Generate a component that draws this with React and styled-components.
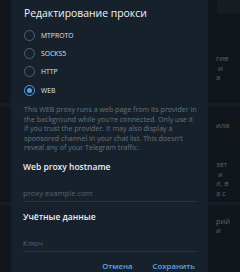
import React from "react";
import styled, { createGlobalStyle } from "styled-components";

const Global = createGlobalStyle`
  html, body { margin: 0; padding: 0; background: #0f151b; }
  body { font-family: "Open Sans", "Noto Sans", sans-serif; overflow: hidden; }
  #root { width: 240px; height: 272px; position: relative; overflow: hidden; }
`;

const BackPage = styled.div`
  display: flex;
  flex-direction: column;
  width: 240px;
  height: 272px;
  background: #10161c;
`;

const BackHeader = styled.div`
  height: 13px;
  display: flex;
  justify-content: flex-end;
`;

const HeaderTint = styled.div`
  width: 23px;
  background: #171c22;
`;

const BackSection = styled.div`
  padding-left: 216px;
  padding-top: ${(p) => p.$top}px;
  display: flex;
  flex-direction: column;
`;

const BackLine = styled.div`
  font-size: 7.5px;
  line-height: 9.6px;
  color: #5d646c;
  white-space: nowrap;
`;

const BackSep = styled.div`
  height: 3px;
  margin-top: ${(p) => p.$top}px;
  background: #161c22;
`;

const Dialog = styled.div`
  position: absolute;
  left: 11px;
  top: -3px;
  width: 197px;
  height: 290px;
  background: #17212b;
  border-radius: 6px;
  box-sizing: border-box;
  padding: 9px 11px 0 12px;
  display: flex;
  flex-direction: column;
`;

const Title = styled.div`
  font-size: 10.4px;
  line-height: 14px;
  font-weight: 500;
  color: #f2f4f6;
  padding-left: 1px;
`;

const RadioList = styled.div`
  margin-top: 6px;
  display: flex;
  flex-direction: column;
`;

const RadioRow = styled.div`
  height: 18.33px;
  display: flex;
  align-items: center;
  gap: 6px;
  padding-left: 1px;
`;

const RadioCircle = styled.div`
  width: 11px;
  height: 11px;
  box-sizing: border-box;
  border-radius: 50%;
  border: 1.5px solid ${(p) => (p.$on ? "#5a9fe0" : "#56626f")};
  display: flex;
  align-items: center;
  justify-content: center;
  &::after {
    content: "";
    width: 5px;
    height: 5px;
    border-radius: 50%;
    background: ${(p) => (p.$on ? "#5a9fe0" : "transparent")};
  }
`;

const RadioLabel = styled.div`
  font-size: 6.8px;
  line-height: 9px;
  color: #dfe3e7;
`;

const Description = styled.div`
  margin-top: 6px;
  font-size: 7.1px;
  line-height: 9.5px;
  color: #66727e;
  padding-left: 1px;
  white-space: nowrap;
`;

const Heading = styled.div`
  margin-top: ${(p) => p.$top}px;
  font-size: 8.5px;
  line-height: 12px;
  font-weight: 600;
  color: #eef0f2;
`;

const Field = styled.div`
  margin-top: 12px;
  height: 16px;
  border-bottom: 1px solid #27333f;
  display: flex;
  align-items: center;
  font-size: 7.6px;
  color: #56636f;
`;

const Actions = styled.div`
  margin-top: 7px;
  display: flex;
  justify-content: flex-end;
  gap: 20px;
  padding-right: 2px;
`;

const ActionButton = styled.div`
  font-size: 7.8px;
  line-height: 14px;
  font-weight: 600;
  color: #5ba5e8;
`;

const protocols = ["MTPROTO", "SOCKS5", "HTTP", "WEB"];

const descLines = [
  "This WEB proxy runs a web page from its provider in",
  "the background while you're connected. Only use it",
  "if you trust the provider. It may also display a",
  "sponsored channel in your chat list. This doesn't",
  "reveal any of your Telegram traffic.",
];

export default function App() {
  return (
    <>
      <Global />
      <BackPage>
        <BackHeader>
          <HeaderTint />
        </BackHeader>
        <BackSection $top={41}>
          <BackLine>гив</BackLine>
          <BackLine>&nbsp;и</BackLine>
          <BackLine>а</BackLine>
        </BackSection>
        <BackSep $top={20} />
        <BackSection $top={15.4}>
          <BackLine>ила</BackLine>
        </BackSection>
        <BackSection $top={29.4}>
          <BackLine>зет</BackLine>
          <BackLine>&nbsp;и</BackLine>
          <BackLine>л, в</BackLine>
          <BackLine>а с</BackLine>
        </BackSection>
        <BackSep $top={3.4} />
        <BackSection $top={11.8}>
          <BackLine>рий</BackLine>
          <BackLine>и</BackLine>
        </BackSection>
      </BackPage>
      <Dialog>
        <Title>Редактирование прокси</Title>
        <RadioList>
          {protocols.map((p) => (
            <RadioRow key={p}>
              <RadioCircle $on={p === "WEB"} />
              <RadioLabel>{p}</RadioLabel>
            </RadioRow>
          ))}
        </RadioList>
        <Description>
          {descLines.map((l, i) => (
            <React.Fragment key={i}>
              {l}
              {i < descLines.length - 1 && <br />}
            </React.Fragment>
          ))}
        </Description>
        <Heading $top={8}>Web proxy hostname</Heading>
        <Field>proxy.example.com</Field>
        <Heading $top={9}>Учётные данные</Heading>
        <Field>Ключ</Field>
        <Actions>
          <ActionButton>Отмена</ActionButton>
          <ActionButton>Сохранить</ActionButton>
        </Actions>
      </Dialog>
    </>
  );
}
